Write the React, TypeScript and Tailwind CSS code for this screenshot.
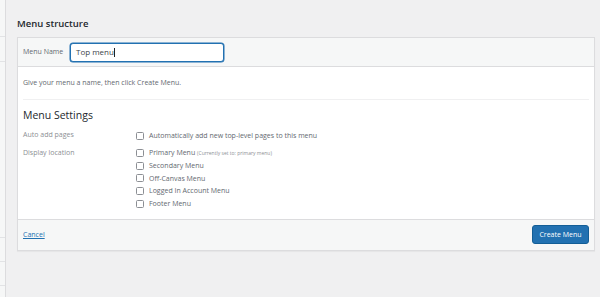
import React from "react";

function Box() {
  return <span className="w-[8px] h-[8px] shrink-0 rounded-[1.5px] border border-[#8c8f94] bg-white" />;
}

function Opt({ children }: { children: React.ReactNode }) {
  return (
    <div className="flex items-center h-[12.7px] gap-[5px]">
      <Box />
      <span className="leading-none">{children}</span>
    </div>
  );
}

export default function App() {
  return (
    <div
      className="w-[600px] h-[297px] bg-[#f0f0f1] flex overflow-hidden text-[#3c434a]"
      style={{ fontFamily: '"Open Sans", "Noto Sans", sans-serif' }}
    >
      <div className="w-[6px] shrink-0 bg-[#f6f7f7] border-r border-[#dcdcde] flex flex-col">
        <div className="h-[37px] border-b border-[#e2e3e5]" />
        <div className="h-[25px] border-b border-[#e2e3e5]" />
        <div className="h-[176px] border-b border-[#e2e3e5]" />
        <div className="h-[24px] border-b border-[#e2e3e5]" />
        <div className="h-[24px] border-b border-[#e2e3e5]" />
      </div>
      <div className="flex-1 pl-[11px] pr-[5px]">
        <div className="h-[37px] flex items-center pt-[10px]">
          <h2 className="text-[9.5px] font-semibold text-[#23282d] leading-none">Menu structure</h2>
        </div>
        <div className="border border-[#dcdcde] bg-white shadow-[0_1px_1px_rgba(0,0,0,0.04)]">
          <div className="h-[29px] bg-[#f6f7f7] border-b border-[#dcdcde] flex items-center pl-[5px]">
            <span className="text-[7px] text-[#646970] w-[47px]">Menu Name</span>
            <div className="w-[154px] h-[19px] rounded-[3px] border border-[#2271b1] shadow-[0_0_0_0.5px_#2271b1] bg-white flex items-center pl-[5px]">
              <span className="text-[8px] text-[#3c434a] leading-none">Top menu</span>
              <span className="w-px h-[9px] bg-[#1d2327]" />
            </div>
          </div>
          <div className="px-[5px]">
            <div className="h-[33px] flex items-center border-b border-[#f0f0f1]">
              <span className="text-[7px] text-[#646970]">Give your menu a name, then click Create Menu.</span>
            </div>
            <div className="pt-[10px]">
              <h3 className="text-[10.5px] font-medium text-[#23282d] leading-none">Menu Settings</h3>
            </div>
            <div className="text-[7px] text-[#8c8f94] pt-[5px]">
              <div className="flex items-center h-[20px]">
                <span className="w-[113px]">Auto add pages</span>
                <Opt>
                  <span className="text-[#646970]">Automatically add new top-level pages to this menu</span>
                </Opt>
              </div>
              <div className="flex pt-[1px] pb-[9px]">
                <span className="w-[113px] h-[12.7px] flex items-center">Display location</span>
                <div className="flex flex-col text-[#646970]">
                  <Opt>
                    Primary Menu <span className="text-[5px] text-[#8c8f94]">(Currently set to: primary menu)</span>
                  </Opt>
                  <Opt>Secondary Menu</Opt>
                  <Opt>Off-Canvas Menu</Opt>
                  <Opt>Logged In Account Menu</Opt>
                  <Opt>Footer Menu</Opt>
                </div>
              </div>
            </div>
          </div>
          <div className="h-[31px] bg-[#f6f7f7] border-t border-[#dcdcde] flex items-center justify-between pl-[5px] pr-[5px]">
            <a className="text-[7px] text-[#2271b1] underline">Cancel</a>
            <button className="w-[57px] h-[19px] bg-[#2271b1] text-white text-[7px] rounded-[3px] border border-[#135e96]">
              Create Menu
            </button>
          </div>
        </div>
      </div>
    </div>
  );
}
